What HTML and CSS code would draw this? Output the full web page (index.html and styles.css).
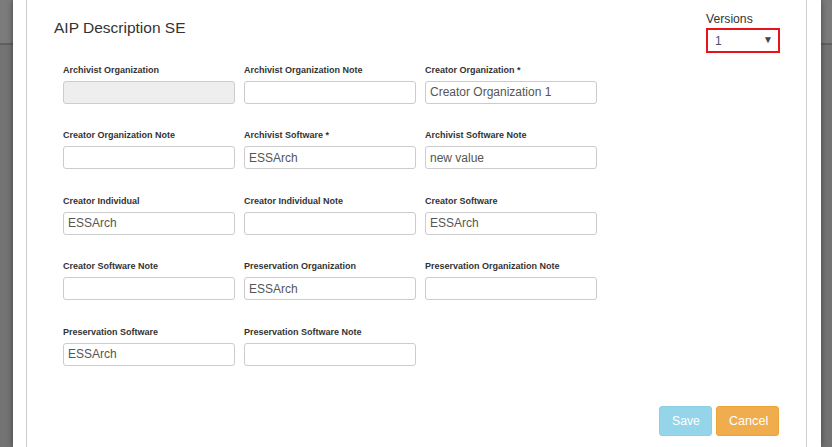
FILE: index.html
```html
<!DOCTYPE html>
<html>
<head>
<meta charset="utf-8">
<link rel="stylesheet" href="styles.css">
</head>
<body>
<div class="modal">
  <div class="panel">
    <div class="header">
      <h1 class="title">AIP Description SE</h1>
      <div class="versions">
        <label class="versions-label">Versions</label>
        <div class="select"><span>1</span><span class="arrow">&#9660;</span></div>
      </div>
    </div>
    <div class="form">
      <div class="field"><label>Archivist Organization</label><input class="input disabled" disabled value=""></div>
      <div class="field"><label>Archivist Organization Note</label><input class="input" value=""></div>
      <div class="field"><label>Creator Organization *</label><input class="input" value="Creator Organization 1"></div>

      <div class="field"><label>Creator Organization Note</label><input class="input" value=""></div>
      <div class="field"><label>Archivist Software *</label><input class="input" value="ESSArch"></div>
      <div class="field"><label>Archivist Software Note</label><input class="input" value="new value"></div>

      <div class="field"><label>Creator Individual</label><input class="input" value="ESSArch"></div>
      <div class="field"><label>Creator Individual Note</label><input class="input" value=""></div>
      <div class="field"><label>Creator Software</label><input class="input" value="ESSArch"></div>

      <div class="field"><label>Creator Software Note</label><input class="input" value=""></div>
      <div class="field"><label>Preservation Organization</label><input class="input" value="ESSArch"></div>
      <div class="field"><label>Preservation Organization Note</label><input class="input" value=""></div>

      <div class="field"><label>Preservation Software</label><input class="input" value="ESSArch"></div>
      <div class="field"><label>Preservation Software Note</label><input class="input" value=""></div>
    </div>
    <div class="footer">
      <button class="btn btn-save">Save</button>
      <button class="btn btn-cancel">Cancel</button>
    </div>
  </div>
</div>
</body>
</html>
```

FILE: styles.css
```css
html, body {
  margin: 0;
  padding: 0;
  height: 447px;
  overflow: hidden;
}
body {
  background: linear-gradient(to bottom, #7b7b7b 0, #7b7b7b 43px, #5f5f5f 43px, #5f5f5f 45px, #737373 45px);
  font-family: "Liberation Sans", Arial, sans-serif;
  color: #333;
}
.modal {
  margin-left: 13px;
  width: 808px;
  height: 447px;
  background: #fff;
  box-shadow: 0 0 6px rgba(0, 0, 0, 0.45);
  padding: 0 14px 0 13px;
  box-sizing: border-box;
}
.panel {
  height: 447px;
  border-left: 1px solid #cfcfcf;
  border-right: 1px solid #cfcfcf;
  display: flex;
  flex-direction: column;
  box-sizing: border-box;
}
.header {
  display: flex;
  justify-content: space-between;
  align-items: flex-start;
  padding: 12px 26px 0 27px;
}
.title {
  margin: 6px 0 0 0;
  font-size: 15.5px;
  line-height: 20px;
  font-weight: normal;
  color: #333;
}
.versions {
  display: flex;
  flex-direction: column;
  width: 74px;
}
.versions-label {
  font-size: 12.2px;
  line-height: 14px;
  color: #333;
  margin-bottom: 2px;
}
.select {
  height: 25px;
  box-sizing: border-box;
  border: 2px solid #e8141c;
  display: flex;
  align-items: center;
  justify-content: space-between;
  padding: 0 5px 0 7px;
  font-size: 12px;
  color: #4a4f6a;
}
.arrow {
  font-size: 10px;
  color: #444;
  margin-top: -2px;
}
.form {
  display: grid;
  grid-template-columns: 172px 172px 172px;
  column-gap: 9px;
  row-gap: 26.5px;
  margin-top: 11.5px;
  padding-left: 36px;
}
.field {
  display: flex;
  flex-direction: column;
}
.field label {
  font-size: 9px;
  line-height: 11px;
  font-weight: bold;
  color: #333;
  margin-bottom: 5px;
  white-space: nowrap;
}
.input {
  height: 23px;
  box-sizing: border-box;
  border: 1px solid #ccc;
  border-radius: 3px;
  padding: 0 4px;
  font-family: "Liberation Sans", Arial, sans-serif;
  font-size: 12px;
  color: #555;
  background: #fff;
  margin: 0;
  width: 172px;
  outline: none;
}
.input.disabled {
  background: #eee;
}
.footer {
  margin-top: auto;
  display: flex;
  justify-content: flex-end;
  gap: 4px;
  padding: 0 27px 11px 0;
}
.btn {
  height: 30px;
  border-radius: 3px;
  font-family: "Liberation Sans", Arial, sans-serif;
  color: #fff;
  padding: 0 12px;
  margin: 0;
  cursor: pointer;
}
.btn-save {
  width: 53px;
  font-size: 12.2px;
  background: #94d5e9;
  border: 1px solid #8dd0e5;
}
.btn-cancel {
  width: 63px;
  font-size: 12.6px;
  background: #f0ad4e;
  border: 1px solid #eea236;
}
```
